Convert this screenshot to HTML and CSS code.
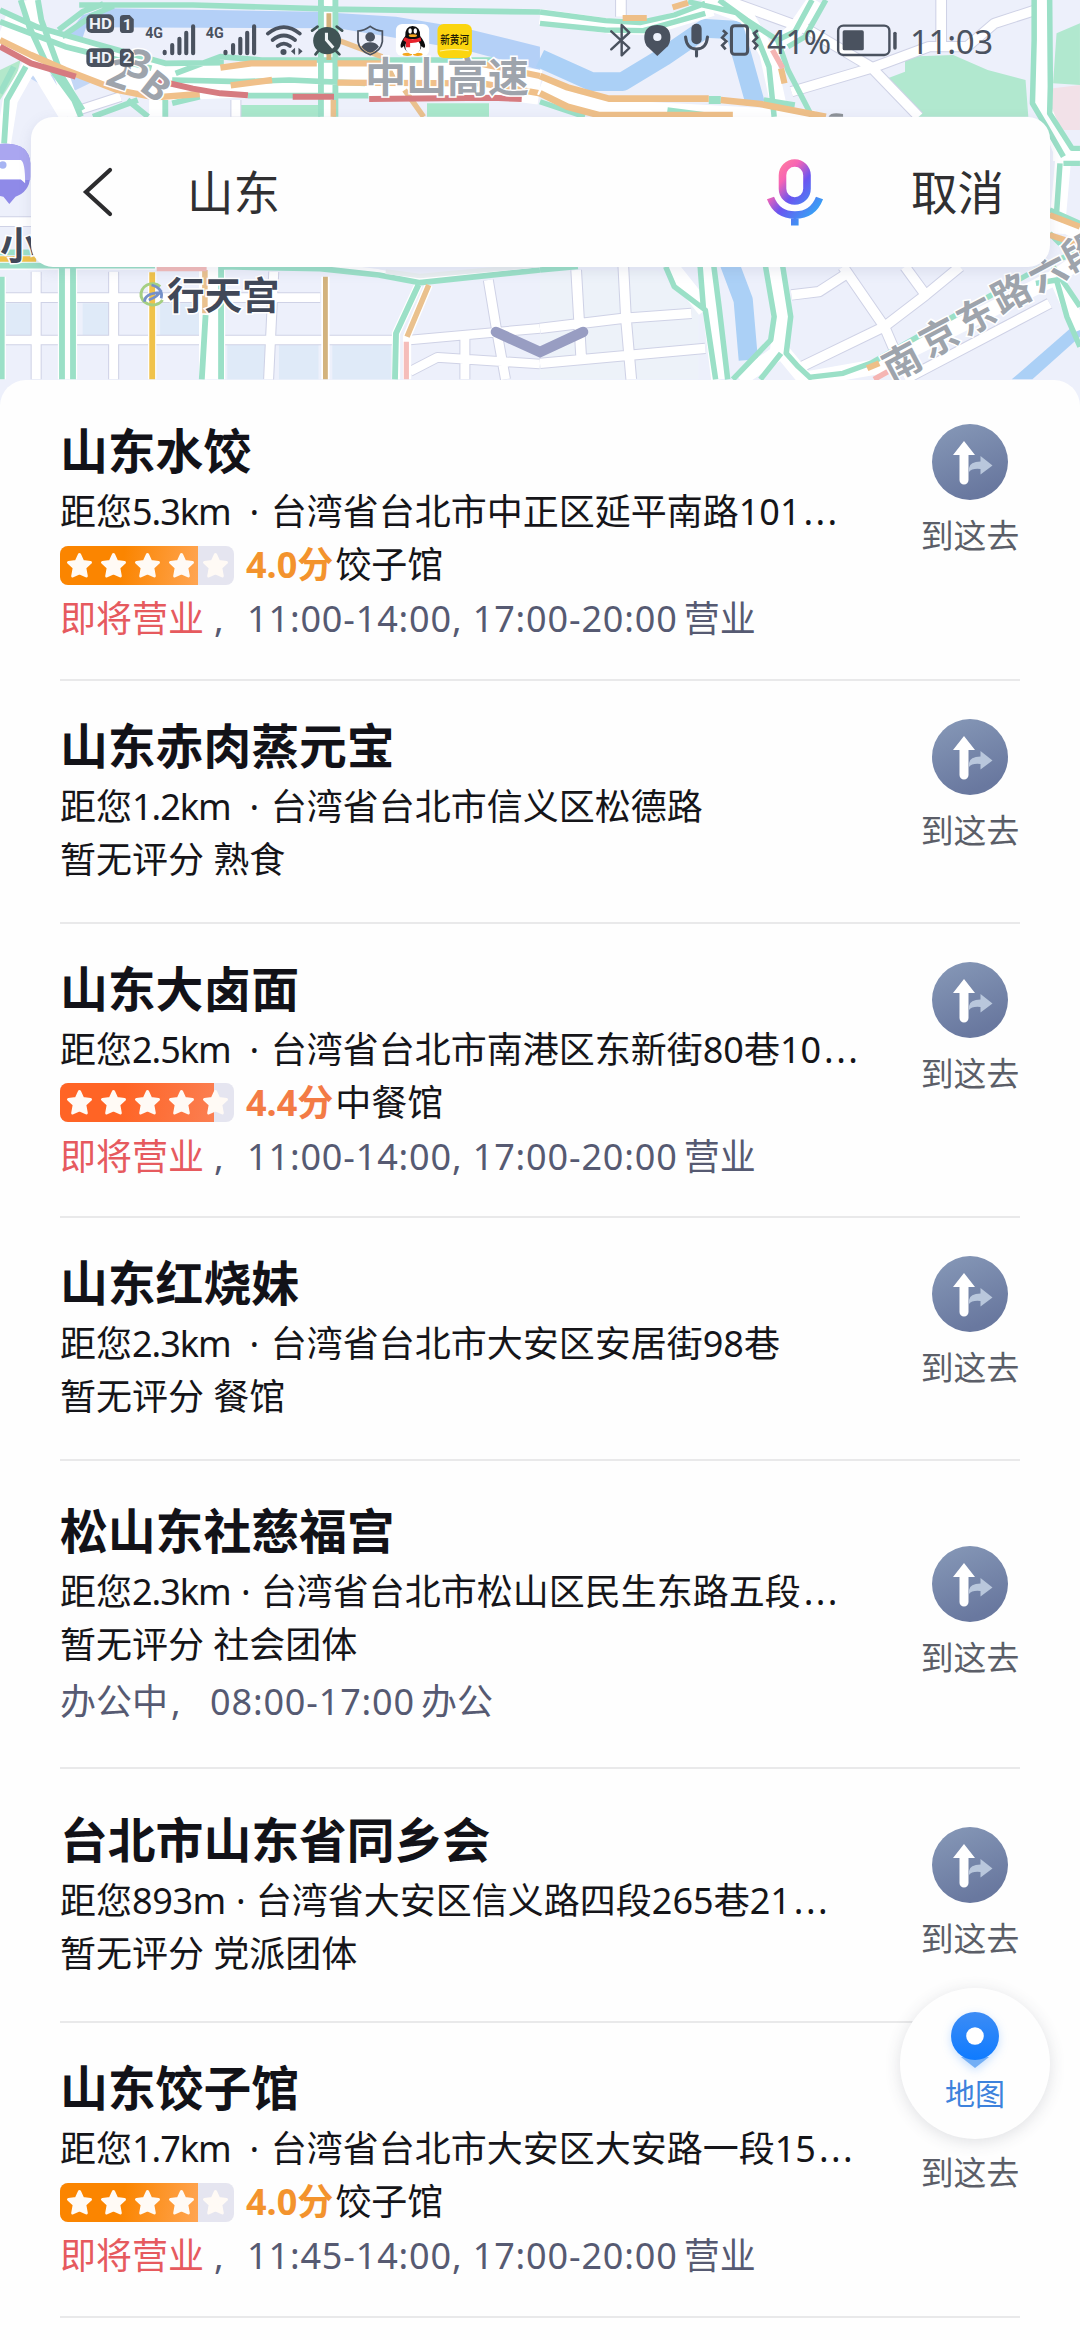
FILE: index.html
```html
<!DOCTYPE html>
<html lang="zh-CN">
<head>
<meta charset="utf-8">
<title>山东</title>
<link rel="stylesheet" href="styles.css">
</head>
<body>
<svg class="defs" width="0" height="0">
  <defs>
    <linearGradient id="routeFill" x1="0" y1="0" x2="0.4" y2="1"><stop offset="0" stop-color="#8799b8"/><stop offset="1" stop-color="#69789f"/></linearGradient>
    <symbol id="route" viewBox="0 0 76 76">
      <circle cx="38" cy="38" r="38" fill="url(#routeFill)"/>
      <path d="M37 48V44Q38 37.500 48.500 37.500V32L60.500 41.500L48.500 50.500V45Q40 44 37 48Z" fill="#b9c7dc"/>
      <path d="M32 17L43 31H36.500V56a4.500 4.500 0 0 1-9 0V31H21Z" fill="#fff"/>
    </symbol>
    <symbol id="stars" viewBox="0 0 174 39">
      <g fill="#fffaf5" stroke="#fffaf5" stroke-width="3" stroke-linejoin="round">
        <path id="st" d="M19.500 8.500L22.800 15.600L30.500 16.500L24.800 21.700L26.300 30L19.500 26.800L12.700 30L14.200 21.700L8.500 16.500L16.200 15.600Z"/>
        <use href="#st" x="34"/><use href="#st" x="68"/><use href="#st" x="102"/><use href="#st" x="136"/>
      </g>
    </symbol>
  </defs>
</svg>
<div class="screen">
  <header class="top">
    <svg class="map" viewBox="0 0 1080 420">
      <defs>
        <g id="minorL" fill="none">
          <path d="M0 893H930M0 1020H1140M105 815V1138M330 815V1138M795 815L780 1138M1190 1020L1568 985M1418 840L1442 990L1468 1138M1190 1115L1270 1072L1568 1092M1350 1010V1138M0 665H100M685 300V350M230 330L350 290"/>
        </g>
        <g id="minorR" fill="none">
          <path d="M540 0L780 90L960 200L1100 350M730 275L960 205L1130 140H1240L1320 70L1440 30M1165 0V140M235 0V50M730 885L810 875L900 815M880 800L1000 980L1050 1100M1060 800L1120 885L1220 800M740 1110L1000 980L1120 885M1060 1138L1480 910M105 810L120 1080M242 800L250 960L265 1138M0 985L240 955L440 940M0 1090L480 1045"/>
        </g>
      </defs>
      <rect width="1080" height="420" fill="#edf0fb"/>
      <g transform="scale(.34436 .33333)" fill="none" stroke-linejoin="round">
        <g fill="#dfeaf8"><path d="M465 910H585V1005H465ZM660 1030H770V1138H660ZM810 1030H925V1138H810ZM965 1030H1135V1138H965ZM10 910H90V1005H10ZM240 910H315V1005H240Z"/></g>
        <path d="M190 110L240 45L310 25L920 35L1150 50L1350 85L1568 140V210L1350 150L1100 105L980 85L250 82L225 160Z" fill="#b4d0f7"/>
        <path d="M80 230L180 290L270 245L200 220Z" fill="#c3d7f6"/>
        <path d="M0 210L60 180L50 220L0 300Z" fill="#b3e8cb"/>
        <path d="M700 315H930V350H700ZM1240 310H1420V350H1240Z" fill="#a9e7cb"/>
        <use href="#minorL" stroke="#cfd2e6" stroke-width="32"/>
        <use href="#minorL" stroke="#fff" stroke-width="26"/>
        <path d="M0 95L250 185L470 250L720 240H1400L1568 262" stroke="#fff" stroke-width="104"/>
        <path d="M80 0L110 90L180 230L220 350M195 350L95 180L30 300L10 430M953 0V350M455 285V350M196 800V1138M615 800V1138" stroke="#fff" stroke-width="44"/>
        <g stroke="#fff" stroke-width="24"><path d="M0 797H930L1100 820L1220 842L1568 805M180 800V1138M212 800V1138M590 800V1138M642 800V1138M5 830V1138M442 817V1138M945 830V1138M1150 1138V1000L1215 855M1245 855L1182 1010V1138"/></g>
        <g stroke="#9be0c7" stroke-width="17">
          <path d="M0 30L110 82L300 138L480 190L650 188M0 65L190 140L440 205M170 90L240 35L300 12M180 110L270 45L330 18M230 15H560L1000 28L1568 36M60 0L85 80L130 180L215 300L235 350M110 0L120 60L180 230L240 330M75 200L20 300L12 430M40 200L0 280M370 300L430 350M480 300V350M500 310L580 290M270 350L400 300M510 220L640 170L760 180H1430M500 240L700 245L840 240L1060 250M720 287H1070M932 0V350M974 0V350"/>
          <path d="M0 797H450M640 800L930 806L1100 825L1220 848L1568 810M180 800V1138M212 800V1138M597 945L586 1138M642 800V1138M5 830V1138M1215 855L1150 1000L1147 1138M0 757H100"/>
        </g>
        <path d="M1120 815L1220 828L1568 795" stroke="#e9eef0" stroke-width="14"/>
        <path d="M0 120L90 165L190 210L340 270L450 292L580 282M640 203L730 190H920M980 190H1130M980 248L1400 250L1568 280M1400 192L1568 228M670 256L790 240" stroke="#f0c08a" stroke-width="19"/>
        <path d="M1245 855L1182 1010M595 810V940M968 300V350M1175 270L1230 350M1130 210L1150 250M980 120L1110 170" stroke="#eac18e" stroke-width="16"/>
        <path d="M0 140L90 190L220 230M450 240L560 266L640 280L720 286M850 290H970M1072 297L1430 293L1515 297" stroke="#d67b80" stroke-width="18"/>
        <path d="M455 806H600M1180 1025V1138" stroke="#f5bdba" stroke-width="15"/>
        <path d="M442 817V1138M0 777H105" stroke="#f0c24a" stroke-width="17"/>
        <path d="M945 830V1138M955 40V180" stroke="#d3b37d" stroke-width="14"/>
        <path d="M0 432Q85 425 88 490V530Q85 575 45 590L27 612L10 590L0 588Z" fill="#8f8ae8"/>
        <path d="M0 432Q85 425 88 490V540H0Z" fill="#aaa6f0"/>
        <path d="M0 480H60Q73 485 73 550L60 538H0Z" fill="#fff"/><circle cx="8" cy="495" r="11" fill="#a7b4f3"/>
        <path d="M410 890A33 33 0 0 1 465 860M410 890A35 35 0 0 0 472 900" stroke="#a5cf83" stroke-width="9"/>
        <path d="M440 855Q475 865 468 895M420 905Q420 880 465 878M432 900Q460 890 468 870" stroke="#7590c8" stroke-width="8"/>
      </g>
      <g transform="translate(540) scale(.34436 .33333)" fill="none" stroke-linejoin="round">
        <path d="M1010 235L1060 215L1060 170L1200 165L1300 210L1410 240L1418 350H1100L1060 300ZM1500 100L1568 70V255L1490 250Z" fill="#b1e8cf"/>
        <path d="M1490 265L1568 255V390H1480Z" fill="#f2e1e8"/>
        <path d="M0 175L150 245L240 245L360 170L480 85L565 90L590 180L625 310M550 790L590 900L605 1080" stroke="#abd0f6" stroke-width="56"/>
        <path d="M1370 1138L1568 960V1010L1430 1138Z" fill="#abd0f6"/>
        <path d="M0 810H340L460 940V1138H0Z" fill="#edf2f9"/>
        <use href="#minorR" stroke="#cfd2e6" stroke-width="34"/>
        <use href="#minorR" stroke="#fff" stroke-width="28"/>
        <path d="M0 50L200 78L320 82L500 25M470 0L600 50L660 160L700 350M660 170L740 90L800 0M0 262L110 305L250 325L800 355M1460 0V320L1520 470L1500 700M1490 460H1568M380 800L480 930M480 800L520 1138M680 800L700 960L690 1060L580 1138M700 1050L770 1138L980 1100L1500 830L1568 780M1480 650L1568 700M1500 830L1568 990" stroke="#fff" stroke-width="46"/>
        <g stroke="#9be0c7" stroke-width="16">
          <path d="M0 36L190 62L290 68L390 45L480 10M0 70L190 90L300 92L480 40M430 5L570 38L620 85L665 200L680 350M520 0L600 60L690 120L720 210L790 350M690 120L740 95L790 0M720 140L770 110L830 0M370 330L520 350M0 305L130 350M650 300L740 315"/>
          <path d="M1435 0V120L1430 310L1470 380L1520 470M1480 0L1482 260L1480 340L1545 445H1568M1520 490H1568M1510 490L1500 640M1480 630L1568 670M1480 700L1568 790"/>
          <path d="M365 800L390 860L480 930L510 1138M465 800L475 930M505 800L520 920L545 1138M655 800L680 950L670 1020L560 1138M705 800L728 950L715 1060L750 1100L790 1138M640 1138L700 1060M780 1132L880 1120L960 1090L1200 950L1440 810L1568 750M1440 850L1500 840L1530 950L1568 1040M1490 800L1568 920"/>
          <path d="M0 810L110 800"/>
        </g>
        <path d="M490 300H525" stroke="#9be0c7" stroke-width="24"/>
        <path d="M0 228L80 262L200 296H490M525 300L640 312L830 350M0 280L80 320L170 345H560" stroke="#eebf88" stroke-width="20"/>
        <path d="M240 54H310M385 22L430 8M700 205L710 250M950 1105L985 1090M1480 645L1568 680M1480 705L1568 735" stroke="#eebf88" stroke-width="18"/>
        <path d="M675 150L705 205M970 1138L1010 1115" stroke="#f5b5b3" stroke-width="16"/>
        <path d="M838 350Q845 335 880 342V350Z" fill="#8d9297"/>
      </g>
      <g class="road-name">
        <text x="365" y="92" font-size="41">中山高速</text>
        <text transform="translate(104 84) rotate(18)" font-size="40">2</text>
        <text transform="translate(125 75) rotate(15)" font-size="40">3</text>
        <text transform="translate(138 89) rotate(38)" font-size="38">B</text>
        <text transform="translate(902 362) rotate(-28)" x="-19" y="14">南</text>
        <text transform="translate(939 337) rotate(-28)" x="-19" y="14">京</text>
        <text transform="translate(976 316) rotate(-28)" x="-19" y="14">东</text>
        <text transform="translate(1011 293) rotate(-28)" x="-19" y="14">路</text>
        <text transform="translate(1048 272) rotate(-28)" x="-19" y="14">六</text>
        <text transform="translate(1081 252) rotate(-28)" x="-19" y="14">段</text>
      </g>
      <g class="place-name">
        <text x="167" y="309">行天宫</text>
        <text x="0" y="259">小</text>
      </g>
      <path d="M496 332L540 352L583 332" fill="none" stroke="#989dc2" stroke-width="10.500" stroke-linecap="round"/>
    </svg>

    <div class="status">
      <svg width="54" viewBox="250 0 156 240" preserveAspectRatio="none">
        <g fill="#4a525f"><rect x="251" y="43" width="80" height="56" rx="15"/><rect x="251" y="145" width="80" height="56" rx="15"/><path d="M358 45H376L388 58V90Q388 99 378 99H358Q348 99 348 89V55Q348 45 358 45ZM358 146H376L388 159V191Q388 200 378 200H358Q348 200 348 190V156Q348 146 358 146Z"/></g>
        <g class="badge-text"><text x="259" y="88" textLength="66" lengthAdjust="spacingAndGlyphs">HD</text><text x="259" y="190" textLength="66" lengthAdjust="spacingAndGlyphs">HD</text><text x="356" y="89">1</text><text x="356" y="190">2</text></g>
      </svg>
      <svg width="61" viewBox="406 0 178 240" preserveAspectRatio="none">
        <text class="net" x="421" y="113" textLength="52" lengthAdjust="spacingAndGlyphs">4G</text>
        <path d="M478 155v5M500 135v25M521 116v44M541 98v62M561 79v81" stroke="#4a525f" stroke-width="12" stroke-linecap="round"/>
      </svg>
      <svg width="60" viewBox="584 0 174 240" preserveAspectRatio="none">
        <text class="net" x="598" y="113" textLength="52" lengthAdjust="spacingAndGlyphs">4G</text>
        <path d="M655 155v5M677 135v25M698 116v44M718 98v62M738 79v81" stroke="#4a525f" stroke-width="12" stroke-linecap="round"/>
      </svg>
      <svg width="46" viewBox="758 0 135 240" preserveAspectRatio="none">
        <g fill="none" stroke="#4a525f" stroke-width="11" stroke-linecap="round"><path d="M778 101Q825 62 872 101M792 120Q825 93 858 120M807 138Q825 124 843 138"/></g>
        <circle cx="824" cy="156" r="9" fill="#4a525f"/><path d="M846 154L858 143V165ZM880 154L868 143V165Z" fill="#4a525f"/>
      </svg>
      <svg width="43" viewBox="893 0 126 240" preserveAspectRatio="none">
        <circle cx="952" cy="122" r="41" fill="#3f5355"/><path d="M908 92L924 80M980 80L996 92M925 154L918 163M979 154L988 163" stroke="#3f5355" stroke-width="8" stroke-linecap="round"/><path d="M950 98V120L970 143" fill="none" stroke="#eef3f5" stroke-width="9"/>
      </svg>
      <svg width="40" viewBox="1019 0 115 240" preserveAspectRatio="none">
        <path d="M1077 79Q1094 92 1112 93V125Q1108 153 1077 164Q1046 153 1042 125V93Q1060 92 1077 79Z" fill="none" stroke="#4a525f" stroke-width="5"/><circle cx="1077" cy="111" r="14" fill="#4a525f"/><path d="M1052 140Q1060 127 1077 127T1102 140Q1092 154 1077 158Q1062 154 1052 140Z" fill="#4a525f"/>
      </svg>
      <svg width="43" viewBox="1134 0 124 240" preserveAspectRatio="none">
        <rect x="1151" y="72" width="96" height="96" rx="18" fill="#fff"/>
        <path d="M1199 78Q1222 80 1221 108Q1238 130 1235 142Q1230 146 1225 138Q1222 158 1199 160Q1177 158 1174 138Q1168 146 1165 142Q1161 130 1178 108Q1177 80 1199 78Z" fill="#0d0d0d"/>
        <ellipse cx="1184" cy="163" rx="14" ry="5" fill="#f4a720"/><ellipse cx="1214" cy="163" rx="14" ry="5" fill="#f4a720"/>
        <ellipse cx="1200" cy="140" rx="22" ry="23" fill="#fff"/><path d="M1177 112Q1199 124 1222 112L1224 123Q1206 130 1192 129V142H1180V126L1172 121Z" fill="#e8222b"/>
        <ellipse cx="1192" cy="93" rx="5" ry="8" fill="#fff"/><ellipse cx="1207" cy="93" rx="5" ry="8" fill="#fff"/><ellipse cx="1200" cy="107" rx="12" ry="4" fill="#f4a720"/>
      </svg>
      <svg width="42" viewBox="1258 0 122 240" preserveAspectRatio="none">
        <rect x="1271" y="72" width="100" height="102" rx="18" fill="#fbd50f"/><path d="M1278 153Q1310 144 1362 152" fill="none" stroke="#fff0a0" stroke-width="3"/>
        <text class="brand" x="1279" y="132" textLength="84" lengthAdjust="spacingAndGlyphs">新黄河</text>
      </svg>
      <div class="status-right">
        <svg width="33" viewBox="190 0 95 240" preserveAspectRatio="none"><path d="M208 94L260 144L238 166V75L260 98L208 148" fill="none" stroke="#4a525f" stroke-width="7" stroke-linejoin="round" stroke-linecap="round"/></svg>
        <svg width="39" viewBox="285 0 113 240" preserveAspectRatio="none"><path d="M341 75C388 75 382 125 371 139L341 168L311 139C300 125 294 75 341 75Z" fill="#4a525f"/><circle cx="341" cy="111" r="12" fill="#edf1fb"/></svg>
        <svg width="38" viewBox="398 0 111 240" preserveAspectRatio="none"><rect x="440" y="71" width="30" height="62" rx="15" fill="#4a525f"/><path d="M423 111Q426 147 455 147T487 111M455 147V168" fill="none" stroke="#4a525f" stroke-width="9" stroke-linecap="round"/></svg>
        <svg width="48" viewBox="509 0 140 240" preserveAspectRatio="none"><rect x="557" y="77" width="47" height="86" rx="9" fill="none" stroke="#4a525f" stroke-width="9"/><path d="M532 91l10 9-12 13 12 11-12 12 10 12M634 91l-11 9 9 13-11 11 11 12-9 12" fill="none" stroke="#4a525f" stroke-width="8"/></svg>
        <span class="pct">41%</span>
        <svg width="71" viewBox="855 0 205 240" preserveAspectRatio="none"><rect x="867" y="77" width="148" height="88" rx="15" fill="none" stroke="#4a525f" stroke-width="7"/><rect x="880" y="91" width="61" height="60" rx="5" fill="#4a525f"/><path d="M1031 100V144" stroke="#4a525f" stroke-width="10" stroke-linecap="round"/></svg>
        <span class="clock">11:03</span>
      </div>
    </div>

    <div class="search">
      <svg class="back" width="34" height="54" viewBox="0 0 34 54"><path d="M29 5L5 27L29 49" fill="none" stroke="#2c2c2e" stroke-width="4.200" stroke-linecap="round"/></svg>
      <span class="query">山东</span>
      <svg class="mic" width="58" height="68" viewBox="0 0 58 68">
        <defs><linearGradient id="micFill" gradientUnits="userSpaceOnUse" x1="8" y1="10" x2="52" y2="48"><stop offset="0" stop-color="#ff7f9c"/><stop offset=".25" stop-color="#f764b4"/><stop offset=".55" stop-color="#6a55f0"/><stop offset="1" stop-color="#3b9bf5"/></linearGradient></defs>
        <rect x="16.500" y="5" width="24.500" height="38" rx="12.200" fill="none" stroke="url(#micFill)" stroke-width="7.600"/>
        <path d="M4.500 40Q11 57 29 57T53.500 40M28.800 57V67.500" fill="none" stroke="url(#micFill)" stroke-width="7.600"/>
      </svg>
      <span class="cancel">取消</span>
    </div>
  </header>

  <main class="sheet">
    <article class="item">
      <div class="info">
        <h2>山东水饺</h2>
        <p class="addr">距您<span class="km">5.3km</span><span class="dot wide">·</span><span>台湾省台北市中正区延平南路101</span><span class="more">...</span></p>
        <p class="meta"><span class="rating"><span class="fill" style="width:138px"></span><svg><use href="#stars"/></svg></span><b class="score">4.0分</b>饺子馆</p>
        <p class="hours"><span class="soon">即将营业</span><span class="comma far">,</span><span class="time">11:00-14:00, 17:00-20:00</span>营业</p>
      </div>
      <div class="go"><svg><use href="#route"/></svg><span>到这去</span></div>
    </article>
    <article class="item short">
      <div class="info">
        <h2>山东赤肉蒸元宝</h2>
        <p class="addr">距您<span class="km">1.2km</span><span class="dot wide">·</span>台湾省台北市信义区松德路</p>
        <p class="meta">暂无评分 熟食</p>
      </div>
      <div class="go"><svg><use href="#route"/></svg><span>到这去</span></div>
    </article>
    <article class="item">
      <div class="info">
        <h2>山东大卤面</h2>
        <p class="addr">距您<span class="km">2.5km</span><span class="dot wide">·</span><span>台湾省台北市南港区东新街80巷10</span><span class="more">...</span></p>
        <p class="meta"><span class="rating hot"><span class="fill" style="width:154px"></span><svg><use href="#stars"/></svg></span><b class="score hot">4.4分</b>中餐馆</p>
        <p class="hours"><span class="soon">即将营业</span><span class="comma far">,</span><span class="time">11:00-14:00, 17:00-20:00</span>营业</p>
      </div>
      <div class="go"><svg><use href="#route"/></svg><span>到这去</span></div>
    </article>
    <article class="item short">
      <div class="info">
        <h2>山东红烧妹</h2>
        <p class="addr">距您<span class="km">2.3km</span><span class="dot wide">·</span>台湾省台北市大安区安居街98巷</p>
        <p class="meta">暂无评分 餐馆</p>
      </div>
      <div class="go"><svg><use href="#route"/></svg><span>到这去</span></div>
    </article>
    <article class="item office">
      <div class="info">
        <h2>松山东社慈福宫</h2>
        <p class="addr">距您<span class="km">2.3km</span><span class="dot">·</span>台湾省台北市松山区民生东路五段<span class="more">...</span></p>
        <p class="meta">暂无评分 社会团体</p>
        <p class="hours">办公中<span class="comma">,</span><span class="time">08:00-17:00</span>办公</p>
      </div>
      <div class="go"><svg><use href="#route"/></svg><span>到这去</span></div>
    </article>
    <article class="item society">
      <div class="info">
        <h2>台北市山东省同乡会</h2>
        <p class="addr">距您<span class="metres">893m</span><span class="dot">·</span><span>台湾省大安区信义路四段265巷21</span><span class="more">...</span></p>
        <p class="meta">暂无评分 党派团体</p>
      </div>
      <div class="go"><svg><use href="#route"/></svg><span>到这去</span></div>
    </article>
    <article class="item">
      <div class="info">
        <h2>山东饺子馆</h2>
        <p class="addr">距您<span class="km">1.7km</span><span class="dot wide">·</span><span>台湾省台北市大安区大安路一段15</span><span class="more">...</span></p>
        <p class="meta"><span class="rating"><span class="fill" style="width:138px"></span><svg><use href="#stars"/></svg></span><b class="score">4.0分</b>饺子馆</p>
        <p class="hours"><span class="soon">即将营业</span><span class="comma far">,</span><span class="time">11:45-14:00, 17:00-20:00</span>营业</p>
      </div>
      <div class="go"><svg><use href="#route"/></svg><span>到这去</span></div>
    </article>
  </main>

  <div class="map-button">
    <svg width="64" height="66" viewBox="0 0 64 66">
      <defs><linearGradient id="pinFill" x1="0" y1="0" x2="0" y2="1"><stop offset="0" stop-color="#3c8cf5"/><stop offset="1" stop-color="#0f7bff"/></linearGradient></defs>
      <path d="M18 50L32 61L46 50Z" fill="#72aef5"/><circle cx="32" cy="29" r="24" fill="url(#pinFill)"/><circle cx="32" cy="29" r="8.800" fill="#fff"/>
    </svg>
    <span>地图</span>
  </div>
</div>
</body>
</html>
```
FILE: styles.css
```css
* { box-sizing: border-box; }
body {
  margin: 0;
  font-family: "Noto Sans", "Noto Sans CJK SC", sans-serif;
  color: #151519;
}
h2, p { margin: 0; font-weight: 400; white-space: nowrap; }
svg { display: block; flex: none; }
.defs { position: absolute; }

.screen {
  position: relative;
  width: 1080px;
  height: 2340px;
  overflow: hidden;
  background: #fefefe;
}

.top { position: relative; height: 380px; }
.map { position: absolute; left: 0; top: 0; width: 1080px; height: 420px; }
.road-name, .place-name { font-weight: 700; paint-order: stroke; stroke: #fff; stroke-width: 3px; }
.road-name { font-size: 38px; fill: #9ea4ac; }
.place-name { font-size: 37.5px; fill: #414858; }

.status {
  position: relative;
  display: flex;
  height: 80px;
  padding-left: 86px;
  color: #4a525f;
}
.status svg { height: 80px; }
.status-right { display: flex; position: absolute; left: 605px; top: 0; line-height: 83px; font-size: 33px; }
.pct { width: 71px; padding-left: 4px; letter-spacing: -.5px; }
.clock { padding-left: 5px; letter-spacing: -.3px; }
.badge-text { font: 700 45px Roboto, sans-serif; fill: #eef2f8; }
.net { font: 700 46px Roboto, sans-serif; fill: #4a525f; }
.brand { font: 500 34px "Noto Sans CJK SC", sans-serif; fill: #1d1a05; }

.search {
  position: relative;
  display: flex;
  align-items: center;
  width: 1019px;
  height: 150px;
  margin: 37px 0 0 31px;
  padding-left: 50px;
  border-radius: 22px;
  background: #fefefe;
  box-shadow: 0 4px 14px rgba(90, 100, 150, .13);
  font-size: 46.5px;
  color: #303032;
}
.query { flex: 1; margin: -5px 0 0 72px; }
.cancel { margin: -5px 46px 0 87px; }
.mic { margin-top: -1px; }

.sheet {
  position: relative;
  height: 1960px;
  padding: 6px 60px 0;
  border-radius: 26px 26px 0 0;
  background: #fefefe;
}
.item {
  display: flex;
  justify-content: space-between;
  height: 294.500px;
  padding-top: 35px;
  border-bottom: 2px solid #e9e9ea;
}
.short { height: 243px; }
.office { height: 307.500px; padding-top: 40px; }
.society { height: 254.500px; padding-top: 41px; }
.info { font-size: 36px; }
h2 { height: 60px; line-height: 60px; font-size: 47.800px; font-weight: 700; color: #121218; }
.addr { height: 59px; line-height: 61px; }
.meta { display: flex; align-items: center; height: 50px; line-height: 50px; white-space: pre; }
.hours { height: 54px; line-height: 58px; color: #565a72; }
.office .hours { margin-top: 4px; line-height: 55px; }
.km { letter-spacing: -1px; }
.metres { letter-spacing: -.4px; }
.dot { display: inline-block; width: 30px; text-align: center; }
.dot.wide { width: 40px; padding-left: 7px; }
.more { letter-spacing: 2.400px; margin-left: 3px; }
.soon { color: #e65a5e; }
.comma { display: inline-block; width: 42px; padding-left: 3px; }
.comma.far { width: 43px; padding-left: 10px; }
.time { letter-spacing: .850px; margin-right: 6px; }

.rating {
  position: relative;
  width: 174px;
  height: 39px;
  border-radius: 8px;
  overflow: hidden;
  background: #e5e5f0;
}
.rating svg { position: absolute; left: 0; top: 0; width: 174px; height: 39px; }
.fill { display: block; height: 39px; background: linear-gradient(100deg, #fb8500 45%, #ffa553); }
.hot .fill { background: linear-gradient(100deg, #ff6425 40%, #fb7f52); }
.score { margin: 0 2px 0 12px; color: #f3932d; }
.score.hot { color: #f37b45; }

.go {
  display: flex;
  flex-direction: column;
  align-items: center;
  width: 100px;
  margin-top: 3px;
  font-size: 32.800px;
  line-height: 46px;
  white-space: nowrap;
  color: #5b5e68;
}
.go svg { width: 76px; height: 76px; margin-bottom: 13px; }
.office .go { margin-top: 45px; }
.society .go { margin-top: 17px; }

.map-button {
  position: absolute;
  left: 900px;
  top: 1988px;
  display: flex;
  flex-direction: column;
  align-items: center;
  width: 150px;
  height: 151px;
  padding-top: 19px;
  border-radius: 50%;
  background: #fefefe;
  box-shadow: 0 3px 16px rgba(60, 70, 90, .16);
  font-size: 30px;
  line-height: 42px;
  color: #3d82dc;
}
.map-button svg { filter: drop-shadow(0 3px 5px rgba(30, 130, 255, .25)); }
```
